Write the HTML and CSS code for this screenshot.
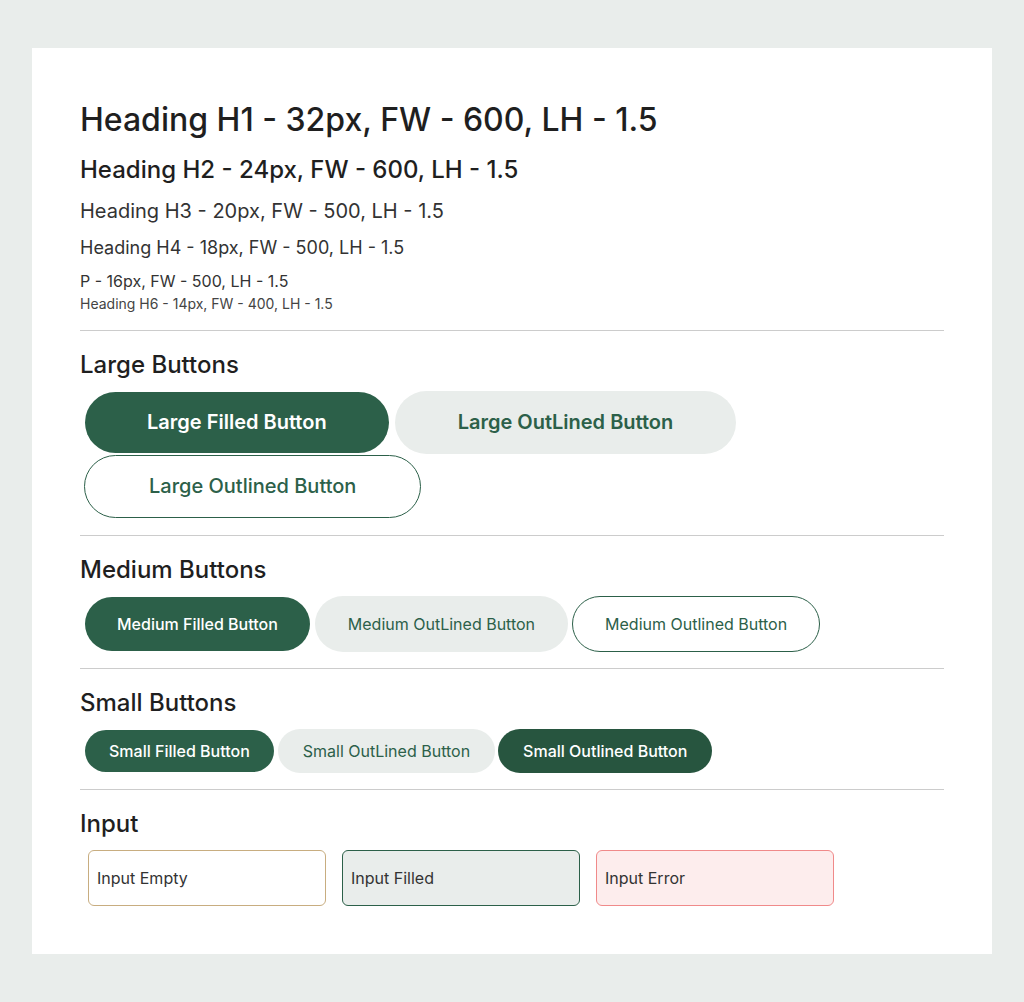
FILE: index.html
```html
<!DOCTYPE html>
<html lang="en">
<head>
<meta charset="utf-8">
<title>Typography &amp; Components</title>
<link rel="stylesheet" href="styles.css">
</head>
<body>
<main class="card">
  <section class="type">
    <h1 class="h1">Heading H1 - 32px, FW - 600, LH - 1.5</h1>
    <h2 class="h2">Heading H2 - 24px, FW - 600, LH - 1.5</h2>
    <h3 class="h3">Heading H3 - 20px, FW - 500, LH - 1.5</h3>
    <h4 class="h4">Heading H4 - 18px, FW - 500, LH - 1.5</h4>
    <p class="p">P - 16px, FW - 500, LH - 1.5</p>
    <h6 class="h6">Heading H6 - 14px, FW - 400, LH - 1.5</h6>
  </section>
  <div class="rule"></div>
  <section class="group">
    <h2 class="title">Large Buttons</h2>
    <div class="btns btns-lg">
      <button class="btn lg filled">Large Filled Button</button>
      <button class="btn lg soft">Large OutLined Button</button>
      <button class="btn lg outline">Large Outlined Button</button>
    </div>
  </section>
  <div class="rule rule-after-lg"></div>
  <section class="group">
    <h2 class="title">Medium Buttons</h2>
    <div class="btns">
      <button class="btn md filled">Medium Filled Button</button>
      <button class="btn md soft">Medium OutLined Button</button>
      <button class="btn md outline">Medium Outlined Button</button>
    </div>
  </section>
  <div class="rule"></div>
  <section class="group">
    <h2 class="title">Small Buttons</h2>
    <div class="btns btns-sm">
      <button class="btn sm filled">Small Filled Button</button>
      <button class="btn sm soft">Small OutLined Button</button>
      <button class="btn sm dark">Small Outlined Button</button>
    </div>
  </section>
  <div class="rule"></div>
  <section class="group">
    <h2 class="title">Input</h2>
    <div class="inputs">
      <div class="field empty">Input Empty</div>
      <div class="field filled-in">Input Filled</div>
      <div class="field error">Input Error</div>
    </div>
  </section>
</main>
</body>
</html>
```
FILE: styles.css
```css
* { box-sizing: border-box; }

html, body {
  margin: 0;
  padding: 0;
}

body {
  background: #e9edeb;
  padding: 48px 32px;
  font-family: Inter, "Noto Sans", sans-serif;
  color: #1f1f1f;
}

.card {
  background: #ffffff;
  padding: 48px;
  display: flex;
  flex-direction: column;
}

.type h1, .type h2, .type h3, .type h4, .type h6, .type p {
  margin: 0;
  line-height: 1.5;
}

.type .h1 { font-size: 32px; font-weight: 500; color: #1f1f1f; margin-bottom: 8px; }
.type .h2 { font-size: 24px; font-weight: 500; color: #1f1f1f; margin-bottom: 8px; }
.type .h3 { font-size: 20px; font-weight: 400; color: #333333; margin-bottom: 8px; }
.type .h4 { font-size: 18px; font-weight: 400; color: #333333; margin-bottom: 8px; }
.type .p  { font-size: 16px; font-weight: 400; color: #333333; }
.type .h6 { font-size: 14px; font-weight: 400; color: #444444; }

.rule {
  height: 1px;
  background: #cccccc;
  margin: 16px 0 16px;
}

.rule-after-lg { margin-top: 17px; }

.group {
  display: flex;
  flex-direction: column;
}

.title {
  margin: 0 0 8px;
  font-size: 24px;
  font-weight: 500;
  line-height: 1.5;
  color: #1f1f1f;
}

.btns {
  display: flex;
  flex-wrap: wrap;
  gap: 0 4px;
  padding-left: 4px;
}

.btns-lg { gap: 1px 5px; }
.btns-sm { gap: 0 3px; }

.btn {
  font-family: Inter, "Noto Sans", sans-serif;
  border: 1px solid transparent;
  border-radius: 999px;
  cursor: pointer;
  white-space: nowrap;
}

.btn.lg { font-size: 20px; line-height: 29px; padding: 16px 62px; font-weight: 600; }
.btn.md { font-size: 16px; line-height: 24px; padding: 15px 32px; }
.btn.sm { font-size: 16px; line-height: 24px; padding: 9px 24px; }

.btn.filled {
  background-color: #2c6049;
  background-clip: padding-box;
  color: #ffffff;
  font-weight: 600;
}
.btn.md.filled, .btn.sm.filled { font-weight: 500; }

.btn.soft {
  background-color: #e9edeb;
  border: none;
  color: #2c6049;
}
.btn.lg.soft { padding: 17px 63px; }
.btn.md.soft { padding: 16px 33px; }
.btn.sm.soft { padding: 10px 25px; }
.btn.md.soft, .btn.sm.soft { font-weight: 400; }

.btn.outline {
  background-color: #ffffff;
  border-color: #2c6049;
  color: #2c6049;
  font-weight: 500;
}
.btn.lg.outline { padding: 16px 64px; }
.btn.md.outline { font-weight: 400; }

.btn.dark {
  background-color: #27553f;
  border: none;
  padding: 10px 25px;
  color: #ffffff;
  font-weight: 500;
}

.inputs {
  display: flex;
  gap: 16px;
  padding-left: 8px;
}

.field {
  width: 238px;
  height: 56px;
  border: 1px solid;
  border-radius: 6px;
  padding: 15px 8px;
  font-size: 16px;
  line-height: 24px;
  color: #333333;
}

.field.empty { border-color: #c8ad80; background: #ffffff; }
.field.filled-in { border-color: #2c6049; background: #e9edeb; }
.field.error { border-color: #f08a8a; background: #fdeded; }
```
